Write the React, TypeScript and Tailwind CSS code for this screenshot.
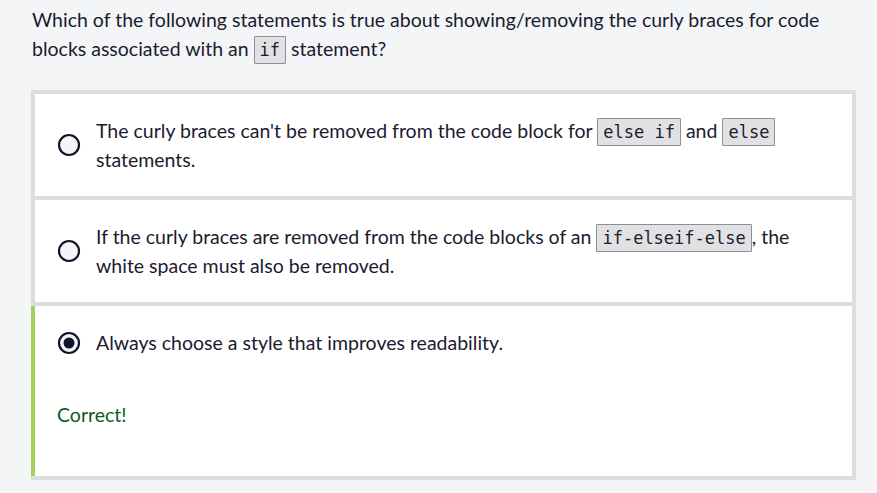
import type { JSX } from 'react'

const Code = ({ children }: { children: string }) => (
  <code className="rounded-[1px] border border-[#8e8e96] bg-[#e1e1e4] px-[5px] py-[3px] font-['DejaVu_Sans_Mono',monospace] text-[17px] leading-none text-[#1c1c2c]">
    {children}
  </code>
)

function Radio({ checked }: { checked?: boolean }): JSX.Element {
  return (
    <svg width="24" height="24" viewBox="0 0 24 24" className="shrink-0">
      <circle cx="12" cy="12" r="10" fill="#f4f5f7" stroke="#12122a" strokeWidth="2.2" />
      {checked && <circle cx="12" cy="12" r="5.5" fill="#12122a" />}
    </svg>
  )
}

function Option({ children, checked, correct, className }: { children: React.ReactNode; checked?: boolean; correct?: boolean; className: string }): JSX.Element {
  return (
    <div className={`bg-white border-l-4 pl-[22px] pr-6 ${className}`}>
      <div className="flex items-center gap-[15px]">
        <Radio checked={checked} />
        <div className="leading-[29px]">{children}</div>
      </div>
      {correct && <div className="mt-[43px] leading-[29px] text-[#0e5a22]">Correct!</div>}
    </div>
  )
}

function App(): JSX.Element {
  return (
    <div className="min-h-screen w-full bg-[#f4f5f7] px-[32px] pt-[5px] font-['Lato',sans-serif] text-[19.5px] text-[#1b1b30]">
      <p className="leading-[29px]">
        Which of the following statements is true about showing/removing the curly braces for code blocks
        associated with an <Code>if</Code> statement?
      </p>
      <div className="-ml-[1px] mt-[27px] -mr-[11px] flex flex-col gap-1 bg-[#dddde0] py-1 pr-1">
        <Option className="border-[#dddde0] py-[22px]">
          The curly braces can't be removed from the code block for <Code>else if</Code> and <Code>else</Code>{' '}
          statements.
        </Option>
        <Option className="border-[#dddde0] py-[22px]">
          If the curly braces are removed from the code blocks of an <Code>if-elseif-else</Code>, the white space
          must also be removed.
        </Option>
        <Option checked correct className="border-[#a6cf5c] pt-[22px] pb-[47px]">
          Always choose a style that improves readability.
        </Option>
      </div>
    </div>
  )
}

export default App
